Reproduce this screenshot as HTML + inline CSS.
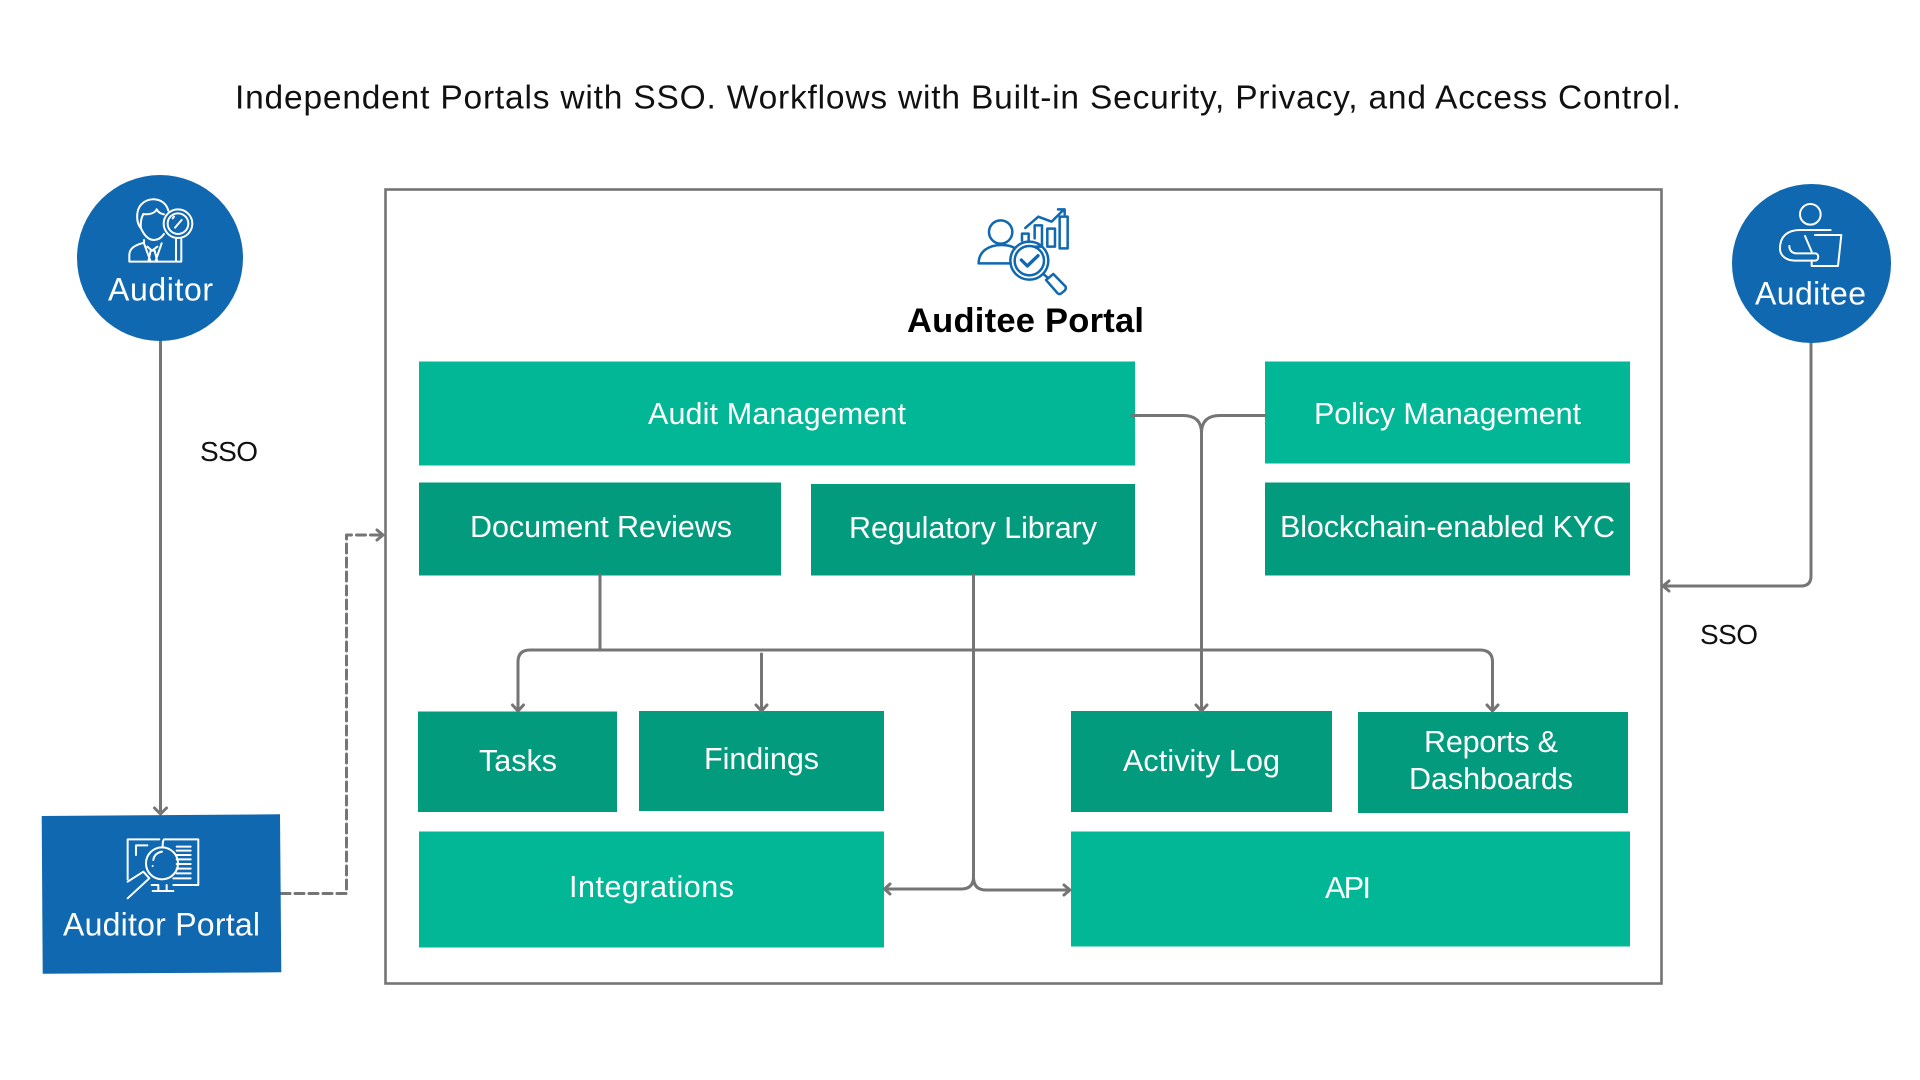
<!DOCTYPE html>
<html><head><meta charset="utf-8"><style>
html,body{margin:0;padding:0;background:#fff;width:1920px;height:1080px;overflow:hidden}
svg{display:block}
text{font-family:"Liberation Sans",sans-serif}
.w{fill:#fff;font-size:30.5px}
.k{fill:#111;font-size:28px}
.l{fill:none;stroke:#757575;stroke-width:3;stroke-linecap:round;stroke-linejoin:round}
.i{fill:none;stroke:#fff;stroke-width:6;stroke-linecap:round;stroke-linejoin:round}
.b{fill:none;stroke:#0F68B0;stroke-width:7.500;stroke-linecap:round;stroke-linejoin:round}
</style></head><body>
<svg width="1920" height="1080" viewBox="0 0 1920 1080" xmlns="http://www.w3.org/2000/svg">
<rect width="1920" height="1080" fill="#fff"/>
<text x="235" y="108.500" class="k" style="font-size:33.500px" textLength="1446" lengthAdjust="spacing">Independent Portals with SSO. Workflows with Built-in Security, Privacy, and Access Control.</text>
<rect x="385.500" y="189.500" width="1276" height="794" fill="none" stroke="#757575" stroke-width="2.600"/>

<g fill="#02B796">
<rect x="419" y="361.500" width="716" height="104"/>
<rect x="1265" y="361.500" width="365" height="102"/>
<rect x="419" y="831.500" width="465" height="116"/>
<rect x="1071" y="831.500" width="559" height="115"/>
</g>
<g fill="#039B7E">
<rect x="419" y="482.500" width="362" height="93"/>
<rect x="811" y="484" width="324" height="91.500"/>
<rect x="1265" y="482.500" width="365" height="93"/>
<rect x="418" y="711.500" width="199" height="100.500"/>
<rect x="639" y="711" width="245" height="100"/>
<rect x="1071" y="711" width="261" height="101"/>
<rect x="1358" y="712" width="270" height="101"/>
</g>

<g class="l">
<path d="M160.500 341V813M154.500 808L160.500 814L166.500 808"/>
<path d="M281 893.500H346.500V535H382" stroke-dasharray="9 5"/>
<path d="M377 530L383 535L377 540"/>
<path d="M1811 343V576Q1811 586 1801 586H1664M1669 581L1663 586L1669 591"/>
<path d="M1132 415.500H1183Q1201.500 415.500 1201.500 433V710M1196 705L1201.500 711L1207 705"/>
<path d="M1265 415.500H1220Q1201.500 415.500 1201.500 433"/>
<path d="M600 575V650"/>
<path d="M1480 650H530Q518 650 518 662V710M512.500 705L518 711L523.500 705"/>
<path d="M1480 650Q1492.500 650 1492.500 662V710M1487 705L1492.500 711L1498 705"/>
<path d="M761.500 654V710M756 705L761.500 711L767 705"/>
<path d="M973.500 575V877Q973.500 889 961 889H885M890 884L884.500 889L890 894"/>
<path d="M973.500 877Q973.500 890 986 890H1069M1064 885L1070 890L1064 895"/>
</g>

<circle cx="160" cy="258" r="83" fill="#0F68B0"/>
<circle cx="1811.500" cy="263.500" r="79.500" fill="#0F68B0"/>
<path d="M41.700 816L280 814.300L281.300 972.300L42.700 973.700Z" fill="#0F68B0"/>

<g transform="translate(40 150) scale(.3333)" class="i">
<path d="M303 235C294 225 290 210 292 190C296 160 320 147 345 148C365 150 380 162 385 182"/>
<path d="M303 235C301 220 303 205 310 192C325 195 345 190 350 178C355 188 365 192 372 193"/>
<path d="M303 235C312 255 325 270 342 270C355 270 365 262 372 252"/>
<path d="M312 270V278C285 285 268 295 268 315V335H424V268M408 268V335"/>
<path d="M312 280L332 335M365 280L346 335M322 290L336 302L352 290M332 302H344L352 335M332 302L325 335"/>
<circle cx="414" cy="221" r="43"/><circle cx="414" cy="221" r="31"/>
<path d="M405 233L425 210M398 205L402 200"/>
</g>

<g transform="translate(1700 170) scale(.3333)" class="i">
<circle cx="331" cy="133" r="31"/>
<path d="M392 180H300C262 180 240 200 240 235C240 260 262 272 285 272H345C358 272 358 250 345 250H290C275 250 268 240 268 228"/>
<path d="M315 198L335 245"/>
<path d="M345 195H424L414 288H335V272"/>
</g>

<g transform="translate(30 800) scale(.3333)" class="i">
<path d="M293 238V118H388M402 118H505V255H430M318 165V136H352M402 118C398 122 398 130 398 142"/>
<path d="M440 140H482M440 152H482M440 165H482M440 178H482M440 192H482M440 206H482M440 220H482M430 235H482"/>
<circle cx="396" cy="190" r="48"/>
<path d="M370 180C372 165 382 158 396 155M368 198V198"/>
<path d="M293 245L340 215L358 235L293 295"/>
<path d="M385 255V272M410 255V272M368 273H430M365 255H385"/>
</g>

<g transform="translate(900 180) scale(.3333)" class="b">
<circle cx="302" cy="156" r="35"/>
<path d="M332 250H236C236 215 265 195 305 195C320 195 335 198 345 205"/>
<circle cx="388" cy="242" r="57"/><circle cx="388" cy="242" r="44"/>
<path d="M364 240L382 258L414 227" stroke-width="10"/>
<path d="M430 282L442 292M438 300L460 282L497 320Q499 326 494 332L484 340Q478 345 472 339Z"/>
<path d="M366 182V161H386V182M404 175V136H426V200H404M442 200V146H465V200ZM479 205V110H503V205Z"/>
<path d="M376 144L415 110L455 125L490 90M474 88H494V103"/>
</g>

<text x="108" y="300.500" class="w" style="font-size:32px" textLength="105" lengthAdjust="spacing">Auditor</text>
<text x="1755" y="304.500" class="w" style="font-size:32px" textLength="111" lengthAdjust="spacing">Auditee</text>
<text x="63" y="935.500" class="w" style="font-size:32px" textLength="197" lengthAdjust="spacing">Auditor Portal</text>
<text x="907" y="332" style="font-size:34.500px;font-weight:700;fill:#000" textLength="237" lengthAdjust="spacing">Auditee Portal</text>
<text x="200" y="461" class="k" textLength="58" lengthAdjust="spacing">SSO</text>
<text x="1700" y="644" class="k" textLength="58" lengthAdjust="spacing">SSO</text>
<text x="648" y="424" class="w" textLength="258" lengthAdjust="spacing">Audit Management</text>
<text x="1314" y="424" class="w" textLength="267" lengthAdjust="spacing">Policy Management</text>
<text x="470" y="537" class="w" textLength="262" lengthAdjust="spacing">Document Reviews</text>
<text x="849" y="538" class="w" textLength="248" lengthAdjust="spacing">Regulatory Library</text>
<text x="1280" y="537" class="w" textLength="335" lengthAdjust="spacing">Blockchain-enabled KYC</text>
<text x="479" y="771" class="w" textLength="78" lengthAdjust="spacing">Tasks</text>
<text x="704" y="769" class="w" textLength="115" lengthAdjust="spacing">Findings</text>
<text x="1123" y="771" class="w" textLength="157" lengthAdjust="spacing">Activity Log</text>
<text x="1424" y="752" class="w" textLength="134" lengthAdjust="spacing">Reports &amp;</text>
<text x="1409" y="789" class="w" textLength="164" lengthAdjust="spacing">Dashboards</text>
<text x="569" y="897" class="w" textLength="165" lengthAdjust="spacing">Integrations</text>
<text x="1325" y="898" class="w" textLength="46" lengthAdjust="spacing">API</text>
</svg>
</body></html>
